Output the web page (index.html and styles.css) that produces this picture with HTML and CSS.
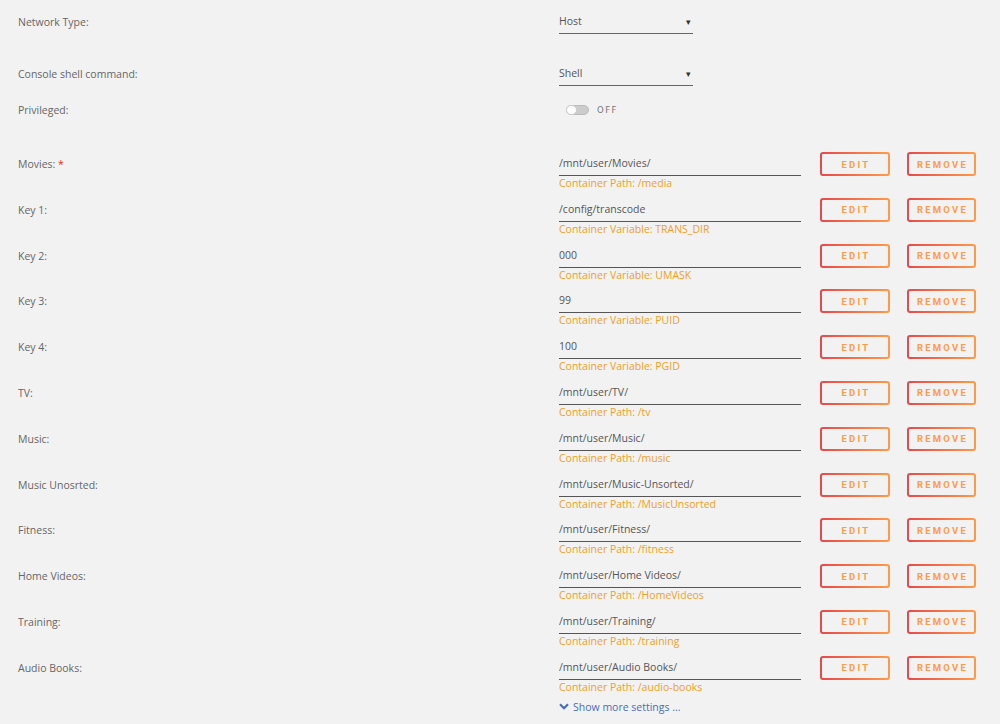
FILE: index.html
```html
<!DOCTYPE html>
<html lang="en">
<head>
    <meta charset="UTF-8">
    <title>Container Settings</title>
<link rel="stylesheet" href="styles.css">
</head>
<body>
<div class="settings">

<div class="row row-select">
    <label class="label">Network Type:</label>
    <div class="select"><span>Host</span><span class="caret">&#9662;</span></div>
</div>

<div class="row row-select second">
    <label class="label">Console shell command:</label>
    <div class="select"><span>Shell</span><span class="caret">&#9662;</span></div>
</div>

<div class="row row-toggle">
    <label class="label">Privileged:</label>
    <div class="toggle"><span class="switch"><span class="knob"></span></span><span class="state">OFF</span></div>
</div>

<div class="paths">
<div class="row row-path">
    <label class="label">Movies: <span class="req">*</span></label>
    <div class="field"><div class="input">/mnt/user/Movies/</div><div class="hint">Container Path: /media</div></div>
    <button class="btn edit">EDIT</button><button class="btn remove">REMOVE</button>
</div>
<div class="row row-path">
    <label class="label">Key 1:</label>
    <div class="field"><div class="input">/config/transcode</div><div class="hint">Container Variable: TRANS_DIR</div></div>
    <button class="btn edit">EDIT</button><button class="btn remove">REMOVE</button>
</div>
<div class="row row-path">
    <label class="label">Key 2:</label>
    <div class="field"><div class="input">000</div><div class="hint">Container Variable: UMASK</div></div>
    <button class="btn edit">EDIT</button><button class="btn remove">REMOVE</button>
</div>
<div class="row row-path">
    <label class="label">Key 3:</label>
    <div class="field"><div class="input">99</div><div class="hint">Container Variable: PUID</div></div>
    <button class="btn edit">EDIT</button><button class="btn remove">REMOVE</button>
</div>
<div class="row row-path">
    <label class="label">Key 4:</label>
    <div class="field"><div class="input">100</div><div class="hint">Container Variable: PGID</div></div>
    <button class="btn edit">EDIT</button><button class="btn remove">REMOVE</button>
</div>
<div class="row row-path">
    <label class="label">TV:</label>
    <div class="field"><div class="input">/mnt/user/TV/</div><div class="hint">Container Path: /tv</div></div>
    <button class="btn edit">EDIT</button><button class="btn remove">REMOVE</button>
</div>
<div class="row row-path">
    <label class="label">Music:</label>
    <div class="field"><div class="input">/mnt/user/Music/</div><div class="hint">Container Path: /music</div></div>
    <button class="btn edit">EDIT</button><button class="btn remove">REMOVE</button>
</div>
<div class="row row-path">
    <label class="label">Music Unosrted:</label>
    <div class="field"><div class="input">/mnt/user/Music-Unsorted/</div><div class="hint">Container Path: /MusicUnsorted</div></div>
    <button class="btn edit">EDIT</button><button class="btn remove">REMOVE</button>
</div>
<div class="row row-path">
    <label class="label">Fitness:</label>
    <div class="field"><div class="input">/mnt/user/Fitness/</div><div class="hint">Container Path: /fitness</div></div>
    <button class="btn edit">EDIT</button><button class="btn remove">REMOVE</button>
</div>
<div class="row row-path">
    <label class="label">Home Videos:</label>
    <div class="field"><div class="input">/mnt/user/Home Videos/</div><div class="hint">Container Path: /HomeVideos</div></div>
    <button class="btn edit">EDIT</button><button class="btn remove">REMOVE</button>
</div>
<div class="row row-path">
    <label class="label">Training:</label>
    <div class="field"><div class="input">/mnt/user/Training/</div><div class="hint">Container Path: /training</div></div>
    <button class="btn edit">EDIT</button><button class="btn remove">REMOVE</button>
</div>
<div class="row row-path">
    <label class="label">Audio Books:</label>
    <div class="field"><div class="input">/mnt/user/Audio Books/</div><div class="hint">Container Path: /audio-books</div></div>
    <button class="btn edit">EDIT</button><button class="btn remove">REMOVE</button>
</div>
</div>

<div class="more">
    <svg width="10" height="7" viewBox="0 0 10 7"><path d="M1 1.2 L5 5.2 L9 1.2" fill="none" stroke="#486dba" stroke-width="2.2"/></svg>
    <span>Show more settings ...</span>
</div>

</div>
</body>
</html>
```

FILE: styles.css
```css
*{box-sizing: border-box;}
body{
    margin: 0;
    background-color: #f2f2f2;
    font-family: "Open Sans", "Noto Sans", sans-serif;
    font-size: 10.5px;
    color: #666;
}
.settings{
    padding: 10px 0 0 18px;
}
.row{
    display: flex;
    align-items: flex-start;
}
.label{
    width: 541px;
    flex-shrink: 0;
    line-height: 24px;
}
.req{
    color: #e22828;
}

.select{
    width: 134px;
    height: 24px;
    border-bottom: 1px solid #666;
    display: flex;
    justify-content: space-between;
    line-height: 23px;
    color: #555;
}
.caret{
    font-size: 9px;
    color: #333;
    padding-right: 2px;
}
.row-select.second{
    margin-top: 28px;
}

.row-toggle{
    margin-top: 12px;
}
.toggle{
    display: flex;
    align-items: center;
    height: 24px;
    padding-left: 7px;
}
.switch{
    width: 23px;
    height: 10px;
    border-radius: 5px;
    background-color: #ccc;
    border: 1px solid #bbb;
    position: relative;
}
.knob{
    position: absolute;
    left: -1px;
    top: -1px;
    width: 11px;
    height: 10px;
    border-radius: 5px;
    background-color: #fff;
    border: 1px solid #ccc;
}
.state{
    margin-left: 8px;
    font-family: "DejaVu Sans", sans-serif;
    font-size: 8.5px;
    letter-spacing: 1.5px;
    color: #777;
}

.paths{
    margin-top: 30px;
}
.row-path{
    height: 45.8px;
}
.field{
    width: 242px;
    flex-shrink: 0;
}
.input{
    height: 24px;
    line-height: 23px;
    border-bottom: 1px solid #555;
    color: #555;
}
.hint{
    color: #ef9f27;
    line-height: 15px;
}
.btn{
    height: 24px;
    margin-top: 0;
    border: 2px solid transparent;
    border-radius: 3px;
    background: linear-gradient(#f2f2f2, #f2f2f2) padding-box, linear-gradient(90deg, #e6494b, #ff9a4a) border-box;
    color: #ff9a4a;
    font-family: "Roboto", sans-serif;
    font-size: 9.5px;
    font-weight: 700;
    letter-spacing: 2.2px;
    padding: 0 0 0 2px;
}
.edit{
    width: 70px;
    margin-left: 19px;
}
.remove{
    width: 69px;
    margin-left: 17px;
}

.more{
    margin-top: -2px;
    margin-left: 541px;
    display: flex;
    align-items: center;
    gap: 4px;
    color: #486dba;
    line-height: 14px;
}
```
